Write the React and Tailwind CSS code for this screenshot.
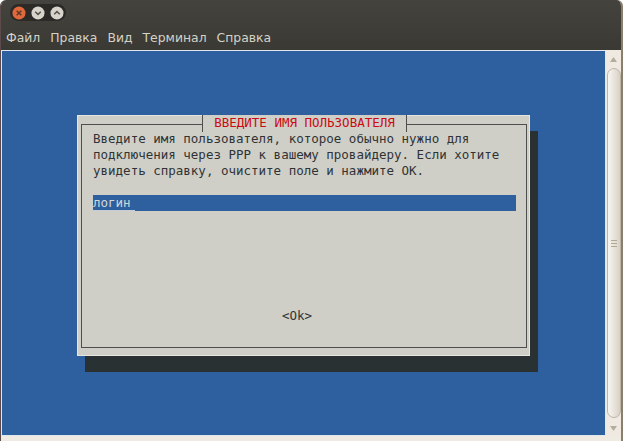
export default function App() {
  const menu = ["Файл", "Правка", "Вид", "Терминал", "Справка"];
  const mono = { fontFamily: '"DejaVu Sans Mono", monospace' };
  return (
    <div className="w-[623px] h-[441px] overflow-hidden flex flex-col bg-[#f0ebe2] rounded-t-[6px] border-r-[2px] border-r-[#8a7f6c] border-l border-l-[#5d4a4a]" style={{ fontFamily: '"DejaVu Sans", sans-serif' }}>
      <div className="h-[50px] shrink-0 bg-gradient-to-b from-[#45433d] to-[#3a3934] flex flex-col">
        <div className="pl-[9px] pt-[4px]">
          <div className="w-[56px] h-[17px] rounded-full bg-[#2b2a27] flex items-center justify-center gap-[5px]">
            <svg width="14" height="14" viewBox="0 0 15 15">
              <circle cx="7.5" cy="7.5" r="7" fill="#e0683a" />
              <path d="M5 5l5 5M10 5l-5 5" stroke="#5b3a2a" strokeWidth="1.6" />
            </svg>
            <svg width="14" height="14" viewBox="0 0 15 15">
              <circle cx="7.5" cy="7.5" r="7" fill="#d8d4cb" />
              <path d="M4.5 6.2l3 2.8 3-2.8" stroke="#55534d" strokeWidth="1.6" fill="none" />
            </svg>
            <svg width="14" height="14" viewBox="0 0 15 15">
              <circle cx="7.5" cy="7.5" r="7" fill="#d8d4cb" />
              <path d="M4.5 8.8l3-2.8 3 2.8" stroke="#55534d" strokeWidth="1.6" fill="none" />
            </svg>
          </div>
        </div>
        <div className="flex pl-[5px] mt-[6px] gap-[10px] text-[12.4px] leading-[21px] text-[#d5d2c6]">
          {menu.map((m) => (
            <span key={m}>{m}</span>
          ))}
        </div>
      </div>
      <div className="h-[386px] shrink-0 flex">
        <div className="w-[605px] h-full bg-[#2e5f9f] border border-[#dfe6ee] flex pl-[75px] pt-[64px]">
          <div className="relative w-[453px] h-[241px] bg-[#cfcfc7] border border-[#e6e6e0] shadow-[8px_16px_0_0_#293133] pt-[8px] pl-[3px]" style={mono}>
            <div className="w-[446px] h-[224px] border border-[#4d4f4f] pl-[11px] pt-[6px] text-[12.5px] leading-[16px] text-[#2f3336]">
              <div className="whitespace-pre">Введите имя пользователя, которое обычно нужно для</div>
              <div className="whitespace-pre">подключения через PPP к вашему провайдеру. Если хотите</div>
              <div className="whitespace-pre">увидеть справку, очистите поле и нажмите ОК.</div>
              <div className="mt-[16px] w-[423px] h-[16px] bg-[#2e5f9f] text-[#d5d8d5] whitespace-pre">
                <span className="inline-block w-[42px] h-[16px] border-b border-b-[#c4cdd6]">логин</span>
              </div>
              <div className="mt-[97px] w-[408px] text-center">&lt;Ok&gt;</div>
            </div>
            <div className="absolute left-[124px] top-[-1px] w-[205px] h-[17px] bg-[#cfcfc7] border-x border-x-[#4d4f4f] text-center text-[12.5px] leading-[16px] text-[#cc0a12]">
              ВВЕДИТЕ ИМЯ ПОЛЬЗОВАТЕЛЯ
            </div>
          </div>
        </div>
        <div className="flex-1 flex flex-col items-center bg-[#efe9e1] pt-[6px] pb-[4px]">
          <svg width="9" height="7" viewBox="0 0 9 7" className="shrink-0">
            <path d="M4.5 1L8 6H1z" fill="#b5ae9f" />
          </svg>
          <div className="mt-[5px] w-[14px] flex-1 rounded-[7px] bg-gradient-to-r from-[#f8f6f2] to-[#d9d1c4] border border-[#bdb5a8] flex flex-col items-center justify-center gap-[2px]">
            <span className="w-[6px] h-[1px] bg-[#b0a996]"></span>
            <span className="w-[6px] h-[1px] bg-[#b0a996]"></span>
            <span className="w-[6px] h-[1px] bg-[#b0a996]"></span>
          </div>
          <svg width="9" height="7" viewBox="0 0 9 7" className="shrink-0 mt-[7px]">
            <path d="M4.5 6L8 1H1z" fill="#b5ae9f" />
          </svg>
        </div>
      </div>
    </div>
  );
}
